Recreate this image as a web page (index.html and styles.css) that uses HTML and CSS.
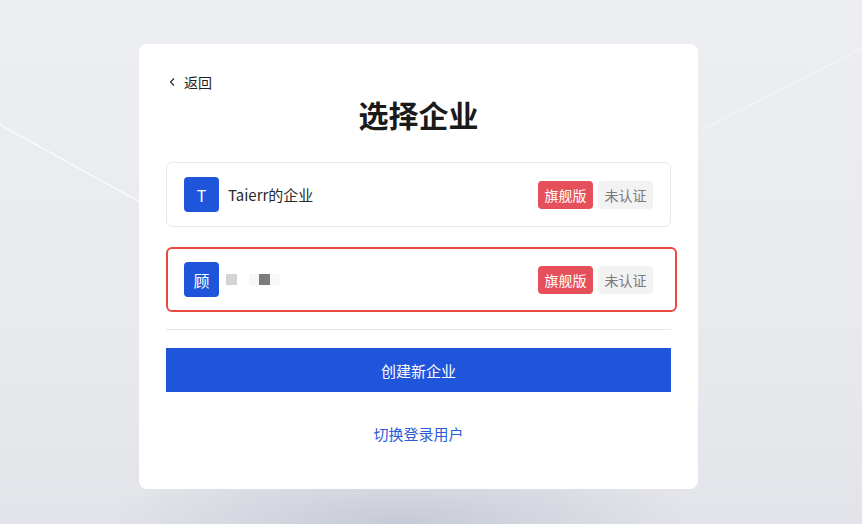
FILE: index.html
```html
<!DOCTYPE html>
<html lang="zh-CN">
<head>
<meta charset="utf-8">
<title>选择企业</title>
<link rel="stylesheet" href="styles.css">
</head>
<body>
<svg class="bg-lines" width="862" height="524" viewBox="0 0 862 524" aria-hidden="true">
  <line x1="0" y1="125" x2="300" y2="290" stroke="#ffffff" stroke-width="1.5" opacity="0.75"/>
  <line x1="640" y1="162" x2="862" y2="48" stroke="#f7f8fa" stroke-width="1.2" opacity="0.8"/>
</svg>
<main class="card">
  <div class="back">
    <svg class="back-icon" width="10" height="12" viewBox="0 0 10 12"><path d="M6 2.5 L2.5 6 L6 9.5" fill="none" stroke="#222" stroke-width="1.1"/></svg>
    <span>返回</span>
  </div>
  <h1 class="title">选择企业</h1>
  <div class="list">
    <div class="item">
      <div class="avatar">T</div>
      <div class="name">Taierr的企业</div>
      <div class="tags">
        <span class="tag tag-red">旗舰版</span>
        <span class="tag tag-gray">未认证</span>
      </div>
    </div>
    <div class="item item-selected">
      <div class="avatar">顾</div>
      <div class="name blur">
        <span class="px px-light"></span>
        <span class="px px-faint"></span>
        <span class="px px-dark"></span>
        <span class="px px-faint2"></span>
      </div>
      <div class="tags">
        <span class="tag tag-red">旗舰版</span>
        <span class="tag tag-gray">未认证</span>
      </div>
    </div>
  </div>
  <div class="divider"></div>
  <button class="primary">创建新企业</button>
  <a class="switch">切换登录用户</a>
</main>
</body>
</html>
```
FILE: styles.css
```css
html, body {
  margin: 0;
  padding: 0;
}
body {
  width: 862px;
  height: 524px;
  overflow: hidden;
  position: relative;
  font-family: "Noto Sans CJK SC", "Noto Sans", sans-serif;
  background:
    radial-gradient(ellipse 300px 70px at 400px 524px, rgba(192,196,210,0.8), rgba(200,204,216,0) 100%),
    linear-gradient(180deg, #eceef1 0%, #e8eaee 60%, #e2e4e9 100%);
}
.bg-lines {
  position: absolute;
  left: 0;
  top: 0;
}
.card {
  position: relative;
  box-sizing: border-box;
  width: 559px;
  height: 445px;
  margin: 44px 0 0 139px;
  background: #fff;
  border-radius: 8px;
  padding: 28px 27px 0 27px;
  display: flex;
  flex-direction: column;
}
.back {
  display: flex;
  align-items: center;
  gap: 6px;
  height: 20px;
  font-size: 14px;
  color: #222;
  line-height: 20px;
  padding-left: 2px;
}
.back-icon {
  display: block;
}
.title {
  margin: 2px 0 0 0;
  text-align: center;
  font-size: 30px;
  line-height: 40px;
  font-weight: 700;
  color: #1a1a1a;
}
.list {
  margin-top: 28px;
  display: flex;
  flex-direction: column;
  gap: 20px;
}
.item {
  box-sizing: border-box;
  height: 65px;
  border: 1px solid #e8e9eb;
  border-radius: 6px;
  display: flex;
  align-items: center;
  padding: 0 17px 0 17px;
}
.item-selected {
  border: 2px solid #ea4a3e;
  margin-right: -6px;
  padding: 0 22px 0 16px;
}
.avatar {
  width: 35px;
  height: 35px;
  border-radius: 4px;
  background: #1f55da;
  color: #fff;
  font-size: 16px;
  display: flex;
  align-items: center;
  justify-content: center;
  flex: none;
}
.name {
  margin-left: 9px;
  font-size: 15px;
  color: #2a2a2a;
  flex: 1;
}
.blur {
  display: flex;
  align-items: center;
  margin-left: 7px;
  height: 12px;
}
.px {
  display: block;
  height: 11px;
}
.px-light {
  width: 11px;
  background: #d3d3d3;
}
.px-faint {
  width: 10px;
  margin-left: 12px;
  background: #f7f7f7;
}
.px-dark {
  width: 11px;
  background: #7c7c7c;
}
.px-faint2 {
  width: 10px;
  background: #f8f8f8;
}
.tags {
  display: flex;
  gap: 5px;
}
.tag {
  width: 55px;
  height: 28px;
  border-radius: 4px;
  font-size: 14px;
  line-height: 26px;
  display: flex;
  align-items: center;
  justify-content: center;
}
.tag-red {
  background: #e5505a;
  color: #fff;
}
.tag-gray {
  background: #f2f2f2;
  color: #7a7a7a;
}
.divider {
  margin-top: 17px;
  height: 1px;
  background: #e6e7e9;
}
.primary {
  margin-top: 18px;
  height: 44px;
  border: none;
  background: #1f55da;
  color: #fff;
  font-family: inherit;
  font-size: 15px;
  padding: 0;
  width: 100%;
}
.switch {
  margin-top: 31px;
  text-align: center;
  font-size: 15px;
  line-height: 22px;
  color: #2a5bd8;
}
```
